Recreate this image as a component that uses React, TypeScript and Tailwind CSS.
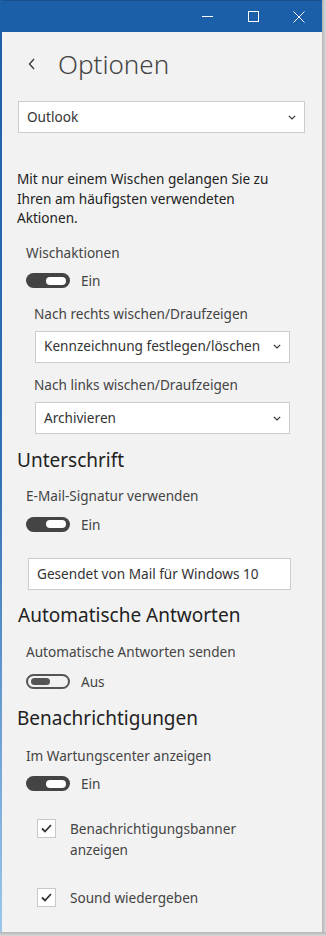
import React from "react";

const font = { fontFamily: '"Noto Sans", "Open Sans", sans-serif' };

function Chevron() {
  return (
    <svg width="8" height="5" viewBox="0 0 8 5" className="shrink-0">
      <path d="M0.8 0.8 L4 4 L7.2 0.8" fill="none" stroke="#333" strokeWidth="1.2" />
    </svg>
  );
}

function Select({ text, className }: { text: string; className: string }) {
  return (
    <div
      className={`flex items-center justify-between bg-white border border-[#cccccc] pl-[8px] pr-[8px] text-[13.6px] text-[#333] ${className}`}
    >
      <span>{text}</span>
      <Chevron />
    </div>
  );
}

function Toggle({ on }: { on: boolean }) {
  if (on) {
    return (
      <div className="w-[44px] h-[15px] rounded-full bg-[#444] flex items-center justify-end pr-[4px]">
        <div className="w-[20px] h-[8px] rounded-full bg-white" />
      </div>
    );
  }
  return (
    <div className="w-[44px] h-[15px] rounded-full border-2 border-[#555] flex items-center pl-[3px]">
      <div className="w-[19px] h-[7px] rounded-full bg-[#555]" />
    </div>
  );
}

function ToggleRow({ on, className }: { on: boolean; className: string }) {
  return (
    <div className={`flex items-center gap-[11px] ${className}`}>
      <Toggle on={on} />
      <span className="text-[13.6px] text-[#444] leading-none">{on ? "Ein" : "Aus"}</span>
    </div>
  );
}

function Check() {
  return (
    <div className="w-[19px] h-[19px] bg-white border border-[#c8c8c8] flex items-center justify-center shrink-0">
      <svg width="11" height="9" viewBox="0 0 11 9">
        <path d="M1 4.5 L4 7.5 L10 1" fill="none" stroke="#333" strokeWidth="1.8" />
      </svg>
    </div>
  );
}

export default function App() {
  return (
    <div className="w-[326px] h-[936px] flex flex-col bg-[#f2f2f2] overflow-hidden" style={font}>
      <div className="flex flex-1 min-h-0">
        <div className="w-[2px] bg-gradient-to-b from-[#1b5fa9] via-[#2f6fb5] to-[#9cc7ea]" />
        <div className="flex-1 flex flex-col min-w-0">
          {/* title bar */}
          <div className="h-[32px] bg-[#1b5fa9] border-t border-[#174f8f] flex items-center justify-end">
            <div className="w-[46px] h-full flex items-center justify-center">
              <div className="w-[11px] h-[1px] bg-white" />
            </div>
            <div className="w-[46px] h-full flex items-center justify-center">
              <div className="w-[11px] h-[11px] border border-white" />
            </div>
            <div className="w-[46px] h-full flex items-center justify-center">
              <svg width="12" height="12" viewBox="0 0 12 12">
                <path d="M0.5 0.5 L11.5 11.5 M11.5 0.5 L0.5 11.5" stroke="white" strokeWidth="1" />
              </svg>
            </div>
          </div>

          <div className="flex-1 flex flex-col text-[#222]">
            {/* header */}
            <div className="flex items-center h-[62px] pt-[1px]">
              <svg width="8" height="12" viewBox="0 0 8 12" className="ml-[26px]">
                <path d="M6 1 L1.5 6 L6 11" fill="none" stroke="#444" strokeWidth="1.5" />
              </svg>
              <span className="ml-[22px] text-[26px] font-light text-[#444] leading-none">Optionen</span>
            </div>

            <Select text="Outlook" className="ml-[16px] w-[287px] h-[32px] mt-[7px]" />

            <p className="ml-[15px] mt-[36px] w-[280px] text-[13.6px] leading-[19.5px] text-[#222]">
              Mit nur einem Wischen gelangen Sie zu Ihren am häufigsten verwendeten Aktionen.
            </p>

            <div className="ml-[24px] mt-[18px] text-[13.6px] text-[#444] leading-none">Wischaktionen</div>
            <ToggleRow on className="ml-[24px] mt-[14px]" />

            <div className="ml-[32px] mt-[19px] text-[13.6px] text-[#444] leading-none">Nach rechts wischen/Draufzeigen</div>
            <Select text="Kennzeichnung festlegen/löschen" className="ml-[33px] w-[255px] h-[32px] mt-[10px]" />

            <div className="ml-[32px] mt-[15px] text-[13.6px] text-[#444] leading-none">Nach links wischen/Draufzeigen</div>
            <Select text="Archivieren" className="ml-[33px] w-[255px] h-[32px] mt-[11px]" />

            <div className="ml-[15px] mt-[16px] text-[19px] h-[20px] text-[#222] leading-[20px]">Unterschrift</div>
            <div className="ml-[24px] mt-[19px] text-[13.6px] text-[#444] leading-none">E-Mail-Signatur verwenden</div>
            <ToggleRow on className="ml-[24px] mt-[14px]" />

            <div className="ml-[26px] mt-[26px] w-[263px] h-[32px] bg-white border border-[#cccccc] flex items-center pl-[8px] text-[13.6px] text-[#333]">
              Gesendet von Mail für Windows 10
            </div>

            <div className="ml-[16px] mt-[15px] text-[19px] h-[20px] text-[#222] leading-[20px]">Automatische Antworten</div>
            <div className="ml-[24px] mt-[20px] text-[13.6px] text-[#444] leading-none">Automatische Antworten senden</div>
            <ToggleRow on={false} className="ml-[24px] mt-[16px]" />

            <div className="ml-[15px] mt-[19px] text-[19px] h-[20px] text-[#222] leading-[20px]">Benachrichtigungen</div>
            <div className="ml-[24px] mt-[21px] text-[13.6px] text-[#444] leading-none">Im Wartungscenter anzeigen</div>
            <ToggleRow on className="ml-[24px] mt-[13px]" />

            <div className="ml-[35px] mt-[28px] flex items-start gap-[14px]">
              <Check />
              <div className="text-[13.6px] text-[#444] leading-[21px] -mt-[1px]">
                Benachrichtigungsbanner
                <br />
                anzeigen
              </div>
            </div>
            <div className="ml-[35px] mt-[28px] flex items-center gap-[14px]">
              <Check />
              <div className="text-[13.6px] text-[#444] leading-none">Sound wiedergeben</div>
            </div>
          </div>
        </div>
        <div className="w-[4px] bg-gradient-to-r from-[#b5b5b5] to-[#d9d9d9]" />
      </div>
      <div className="h-[4px] bg-gradient-to-b from-[#b5b5b5] to-[#d9d9d9]" />
    </div>
  );
}
